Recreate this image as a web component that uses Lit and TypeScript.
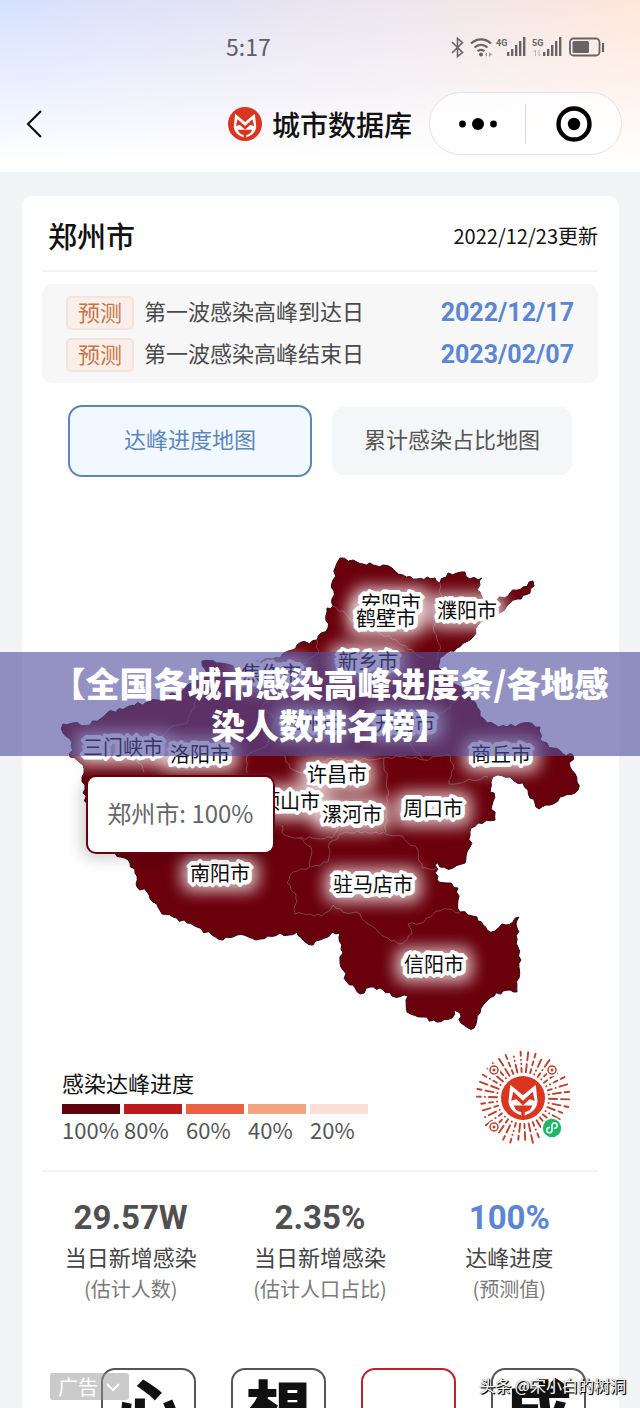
import { LitElement, html, svg, css } from "lit";
import { customElement, property, state } from "lit/decorators.js";
import { classMap } from "lit/directives/class-map.js";

type Pt = [number, number];

/* Outline of Henan province, clockwise from the north-west corner of Anyang. */
const OUTLINE: Pt[] = [
  [340, 558], [353, 560], [363, 564], [373, 565], [383, 565], [392, 568], [403, 575], [417, 579],
  [427, 577], [435, 578], [440, 583], [448, 573], [457, 573], [465, 572], [470, 579], [482, 578],
  [480, 585], [477, 590], [480, 592], [482, 597], [489, 601], [497, 600], [510, 593], [523, 587],
  [533, 581], [534, 586], [530, 593], [517, 599], [507, 606], [500, 613], [490, 618], [478, 625],
  [473, 637], [466, 642], [457, 648], [450, 651], [440, 658], [438, 667], [446, 675], [453, 683],
  [467, 693], [477, 707], [480, 716], [487, 723], [507, 727], [523, 723], [540, 727], [540, 740],
  [553, 748], [563, 754], [573, 755], [570, 767], [577, 782], [578, 790], [560, 797], [550, 805],
  [539, 809], [535, 803], [530, 798], [528, 790], [523, 783], [514, 781], [510, 777], [497, 775],
  [491, 782], [490, 792], [494, 793], [492, 805], [495, 820], [478, 823], [471, 828], [470, 847],
  [466, 856], [465, 863], [453, 868], [440, 867], [437, 862], [437, 880], [447, 883], [458, 888],
  [458, 900], [460, 912], [477, 917], [483, 925], [487, 930], [495, 931], [502, 924], [513, 922],
  [519, 917], [517, 928], [518, 947], [521, 960], [519, 978], [517, 992], [503, 991], [494, 996],
  [484, 1004], [480, 1013], [474, 1028], [468, 1028], [461, 1023], [460, 1013], [454, 1010],
  [452, 1018], [437, 1022], [423, 1017], [407, 1012], [408, 996], [392, 996], [380, 988],
  [370, 987], [360, 994], [353, 985], [347, 982], [343, 970], [340, 962], [343, 953], [340, 933],
  [332, 932], [320, 940], [313, 945], [303, 940], [297, 932], [289, 935], [280, 933], [260, 939],
  [237, 935], [223, 940], [212, 935], [197, 927], [187, 923], [173, 917], [162, 914], [153, 902],
  [147, 892], [137, 887], [135, 873], [130, 863], [115, 853], [100, 830], [90, 812], [83, 793],
  [85, 785], [82, 777], [83, 765], [70, 757], [72, 743], [63, 733], [63, 724], [73, 723],
  [90, 725], [107, 713], [127, 707], [157, 700], [180, 692], [193, 683], [207, 673], [202, 661],
  [220, 663], [240, 670], [253, 663], [280, 658], [292, 650], [297, 645], [317, 640], [328, 628],
  [327, 608], [333, 606], [333, 580], [337, 563],
];

const BORDERS: Pt[][] = [
  [[333, 606], [346, 614], [360, 628], [378, 632], [396, 640], [412, 650], [424, 658]],
  [[440, 583], [441, 600], [437, 616], [434, 632], [440, 645], [437, 660]],
  [[317, 640], [318, 654], [302, 664], [290, 678], [280, 694], [262, 706]],
  [[198, 678], [196, 700], [188, 722], [170, 728], [158, 742], [134, 752], [144, 772]],
  [[262, 706], [276, 720], [268, 744], [247, 756], [247, 773]],
  [[284, 755], [290, 768], [306, 774], [330, 758], [352, 760], [384, 758], [388, 790], [386, 832]],
  [[384, 758], [404, 756], [424, 760], [448, 754], [454, 768], [449, 784], [466, 781], [488, 777]],
  [[424, 760], [400, 734], [420, 718], [444, 712], [460, 696]],
  [[282, 825], [284, 835], [298, 838], [311, 847], [310, 867], [293, 872], [287, 883], [296, 894],
    [295, 914], [310, 914], [322, 916], [333, 905], [343, 912], [356, 912], [372, 926], [388, 938],
    [402, 944], [412, 934], [408, 924], [424, 922], [436, 911], [448, 909], [460, 913]],
  [[311, 867], [328, 862], [330, 842], [346, 832], [376, 832], [402, 836], [418, 850], [422, 868], [437, 868]],
  [[298, 838], [332, 838], [338, 826]],
];

/* Adds small coast-like teeth between the surveyed points. */
function rough(points: Pt[], closed: boolean, amp: number): string {
  const out: string[] = [];
  const n = points.length;
  let k = 0;
  for (let i = 0; i < (closed ? n : n - 1); i++) {
    const [ax, ay] = points[i];
    const [bx, by] = points[(i + 1) % n];
    const len = Math.hypot(bx - ax, by - ay) || 1;
    const steps = Math.max(1, Math.round(len / 4));
    for (let s = 0; s < steps; s++) {
      const t = s / steps;
      k++;
      const d = s === 0 ? 0 : Math.sin(k * 2.4 + Math.sin(k * 5.1) * 2) * amp;
      const x = ax + (bx - ax) * t - ((by - ay) / len) * d;
      const y = ay + (by - ay) * t + ((bx - ax) / len) * d;
      out.push(`${x.toFixed(1)} ${y.toFixed(1)}`);
    }
  }
  if (!closed) out.push(points[n - 1].join(" "));
  return `M${out.join("L")}${closed ? "Z" : ""}`;
}

const CITIES: { name: string; x: number; y: number }[] = [
  { name: "安阳市", x: 391, y: 611 },
  { name: "鹤壁市", x: 386, y: 626 },
  { name: "濮阳市", x: 467, y: 618 },
  { name: "新乡市", x: 368, y: 669 },
  { name: "焦作市", x: 271, y: 681 },
  { name: "郑州市", x: 312, y: 731 },
  { name: "开封市", x: 405, y: 731 },
  { name: "三门峡市", x: 123, y: 755 },
  { name: "洛阳市", x: 200, y: 762 },
  { name: "商丘市", x: 501, y: 762 },
  { name: "许昌市", x: 337, y: 782 },
  { name: "平顶山市", x: 280, y: 809 },
  { name: "漯河市", x: 352, y: 822 },
  { name: "周口市", x: 433, y: 816 },
  { name: "南阳市", x: 220, y: 881 },
  { name: "驻马店市", x: 373, y: 892 },
  { name: "信阳市", x: 434, y: 972 },
];

const fox = svg`
  <circle cx="50" cy="50" r="50" fill="#d9351f"/>
  <path d="M21 20 50 44 79 20 83 58C81 76 69 84 55 89L50 93 45 89C31 84 19 76 17 58Z" fill="#fff"/>
  <path d="M28 36 50 56 72 36 77 56 65 53 50 67 35 53 23 56Z" fill="#d9351f"/>
  <path d="M29 67H71C68 77 61 81 54 82V96H46V82C39 81 32 77 29 67Z" fill="#d9351f"/>
`;

@customElement("city-map")
class CityMap extends LitElement {
  static styles = css`
    :host { display: block; position: relative; }
    .map { display: block; width: 100%; height: auto; }
    .land { fill: #6a000c; stroke: #2e0a10; stroke-width: 1; stroke-linejoin: round; }
    .border { fill: none; stroke: #80404b; stroke-width: 1; }
    .glow { fill: #fff; opacity: 0.75; filter: blur(8px); }
    .label {
      fill: #0a0a0a; stroke: #fff; stroke-width: 9; stroke-linejoin: bevel; paint-order: stroke;
      font-size: 20px; text-anchor: middle;
    }
    .tip {
      position: absolute; left: 7.9%; top: 52.2%; box-sizing: border-box; height: 79px; width: 189px;
      display: grid; place-items: center; padding-bottom: 4px; border: 2px solid #6a000c; border-radius: 10px;
      background: #fff; color: #666; font-size: 24px; white-space: nowrap;
      box-shadow: -4px 4px 16px rgba(0, 0, 0, 0.2);
    }
  `;
  render() {
    return html`
      <svg class="map" viewBox="42 477 556 571" role="img" aria-label="达峰进度地图">
        <path class="land" d=${rough(OUTLINE, true, 1.8)}></path>
        ${BORDERS.map((b) => svg`<path class="border" d=${rough(b, false, 1.4)}></path>`)}
        ${CITIES.map((c) => {
          const w = c.name.length * 20 + 16;
          return svg`<rect class="glow" x=${c.x - w / 2} y=${c.y - 24} width=${w} height="34" rx="8"></rect>`;
        })}
        ${CITIES.map((c) => svg`<text class="label" x=${c.x} y=${c.y}>${c.name}</text>`)}
      </svg>
      <div class="tip" role="tooltip">郑州市: 100%</div>
    `;
  }
}

@customElement("mini-code")
class MiniCode extends LitElement {
  static styles = css`
    :host { display: block; }
    .code { display: block; width: 96px; height: 96px; }
  `;
  private rays() {
    const parts = [];
    const count = 38;
    for (let i = 0; i < count; i++) {
      const a = (i / count) * Math.PI * 2 + 0.03;
      let r = 26;
      let k = i * 7 + 3;
      while (r < 46) {
        k = (k * 37 + 11 + i) % 101;
        const len = k % 3 === 0 ? 8 : k % 3 === 1 ? 0.2 : 4;
        const end = Math.min(r + len, 46.5);
        const p = (q: number) => `${(48 + Math.cos(a) * q).toFixed(1)} ${(48 + Math.sin(a) * q).toFixed(1)}`;
        parts.push(svg`<path d=${`M${p(r)}L${p(end)}`}></path>`);
        r = end + 4;
      }
    }
    return parts;
  }
  render() {
    return html`
      <svg class="code" viewBox="0 0 96 96" role="img" aria-label="小程序码">
        <g stroke="#b8432f" stroke-width="1.9" stroke-linecap="round">${this.rays()}</g>
        ${[[19, 20], [77, 20], [19, 77]].map(
          ([x, y]) => svg`
            <circle cx=${x} cy=${y} r="6.5" fill="#fff"></circle>
            <circle cx=${x} cy=${y} r="4" fill="none" stroke="#b8432f" stroke-width="1.5"></circle>
            <circle cx=${x} cy=${y} r="1.5" fill="#b8432f"></circle>`,
        )}
        <circle cx="48" cy="48" r="24" fill="#fff"></circle>
        <g transform="translate(26 26) scale(.44)">${fox}</g>
        <circle cx="77" cy="78" r="11" fill="#fff"></circle>
        <circle cx="77" cy="78" r="9.2" fill="#1fb868"></circle>
        <path d="M74.4 77.6A2.6 2.6 0 1 0 77 80.4V75.6A2.6 2.6 0 1 1 79.6 78.2" fill="none"
          stroke="#fff" stroke-width="1.5" stroke-linecap="round"></path>
      </svg>
    `;
  }
}

@customElement("stat-cell")
class StatCell extends LitElement {
  @property() value = "";
  @property() label = "";
  @property() note = "";
  @property({ type: Boolean }) accent = false;
  static styles = css`
    :host { display: block; text-align: center; white-space: nowrap; }
    .value { font: 700 33px/40px Roboto, "Noto Sans CJK SC", sans-serif; color: #505052; }
    .accent { color: #5b86d6; }
    .label { font-size: 22px; line-height: 36px; color: #444; }
    .note { font-size: 20px; line-height: 30px; color: #7a7a7a; }
  `;
  render() {
    return html`
      <div class=${classMap({ value: true, accent: this.accent })}>${this.value}</div>
      <div class="label">${this.label}</div>
      <div class="note">${this.note}</div>
    `;
  }
}

@customElement("app-root")
class AppRoot extends LitElement {
  @state() private tab = 0;

  static styles = css`
    :host {
      display: block; position: relative; height: 100vh; overflow: hidden; background: #f2f4f6;
      font-family: "Noto Sans CJK SC", sans-serif; color: #111;
    }
    button { font: inherit; color: inherit; border: 0; background: none; padding: 0; cursor: pointer; }
    .top {
      background:
        linear-gradient(to bottom, rgba(255, 255, 255, 0) 0, rgba(255, 255, 255, 0.5) 50%, #fff 94%),
        linear-gradient(to right, #d5e1ff 0, #e2e2f5 30%, #ede6ee 62%, #ffe6d9 100%);
    }
    .status { display: flex; justify-content: space-between; padding: 34px 34px 30px 226px; }
    .time { font-size: 23px; line-height: 24px; color: #605d64; }
    .signals { display: block; width: 156px; height: 28px; }
    .nav { display: flex; align-items: center; padding: 0 18px 17px 20px; }
    .back { display: grid; place-items: center; width: 28px; height: 40px; }
    .brand { display: flex; align-items: center; gap: 10px; margin-left: auto; margin-right: 17px; }
    .logo { width: 34px; height: 34px; }
    .name { margin: 0; font-size: 28px; line-height: 40px; font-weight: 500; white-space: nowrap; }
    .capsule {
      display: flex; align-items: center; box-sizing: border-box; width: 193px; height: 63px;
      border: 1px solid #e3e2e5; border-radius: 32px; background: rgba(255, 255, 255, 0.8);
    }
    .pill { flex: 1; display: grid; place-items: center; height: 40px; }
    .pill + .pill { border-left: 1px solid #dcdcde; }

    .card { margin: 24px 21px 0 22px; padding: 0 21px 0 20px; background: #fff; border-radius: 10px; }
    .head {
      display: flex; justify-content: space-between; align-items: center; height: 73px;
      border-bottom: 2px solid #f3f3f4; padding-top: 1px;
    }
    .city { margin: 0; padding: 2px 0 0 6px; font-size: 29px; line-height: 40px; font-weight: 500; }
    .date { font-size: 20px; padding-top: 4px; }
    .forecast {
      display: grid; gap: 8px; margin-top: 12px; padding: 12px 24px 11px; background: #f7f7f8; border-radius: 10px;
    }
    .line { display: flex; align-items: center; height: 34px; font-size: 22px; line-height: 30px; color: #4a4a4a; white-space: nowrap; }
    .what { padding-bottom: 6px; }
    .tag {
      box-sizing: border-box; width: 68px; height: 34px; line-height: 26px; margin-right: 10px; text-align: center;
      color: #c57643; background: #f9eee9; border: 2px solid #f4e2dc; border-radius: 5px;
    }
    .day { margin-left: auto; font: 700 25px/34px Roboto, sans-serif; color: #5b86d0; }
    .tabs { display: flex; align-items: center; gap: 20px; height: 72px; margin: 22px 26px 0; }
    .tab {
      flex: 1; height: 68px; padding-bottom: 6px; font-size: 22px; color: #555; background: #f5f6f7;
      border-radius: 12px; white-space: nowrap;
    }
    .tab.on { height: 72px; color: #5b87bd; background: #f2f8ff; border: 2px solid #5b87b8; border-radius: 14px; }
    .legend { display: flex; justify-content: space-between; align-items: flex-start; padding: 2px 27px 24px 20px; }
    .legend-title { padding-top: 17px; font-size: 22px; line-height: 30px; }
    .scale { display: grid; grid-template-columns: repeat(5, 58px); gap: 0 4px; margin: 7px 0 0; padding: 0; list-style: none; }
    .step { font-size: 22px; line-height: 30px; color: #555; white-space: nowrap; }
    .step::before { content: ""; display: block; height: 10px; background: var(--c); }
    .s100 { --c: #5f000c; }
    .s80 { --c: #bd1a20; }
    .s60 { --c: #ec6044; }
    .s40 { --c: #f5a483; }
    .s20 { --c: #fce0d6; }
    .stats {
      display: grid; grid-template-columns: repeat(3, 1fr); padding-top: 26px; margin: 0 -6px;
    }
    .rule { border: 0; border-top: 2px solid #f3f3f4; margin: 0; }
    .ad { position: relative; display: flex; gap: 35px; padding: 64px 12px 20px 59px; }
    .tile {
      box-sizing: border-box; width: 95px; height: 95px; border: 2px solid #555; border-radius: 14px;
      font-size: 66px; line-height: 75px; font-weight: 900; text-align: center;
    }
    .red { border-color: #b8262b; }
    .badge {
      position: absolute; left: 8px; top: 69px; display: flex; align-items: center; gap: 8px; height: 27px;
      padding: 0 9px 0 8px; border-radius: 3px; background: rgba(150, 150, 150, 0.5); color: #fff; font-size: 20px;
      line-height: 24px;
    }
    .banner {
      position: absolute; left: 0; right: 0; top: 652px; box-sizing: border-box; padding: 10px 20px 10px 40px;
      background: rgba(82, 79, 158, 0.62); color: #fff; text-align: center;
      font-size: 34px; line-height: 42px; font-weight: 900;
    }
    .mark {
      position: absolute; right: 14px; bottom: 11px; color: #fff; font-size: 16px; line-height: 24px;
      text-shadow: 1px 1px 1px #000, 1px 1px 0 #333, 0 0 1px #333; white-space: nowrap;
    }
  `;

  private bars(x: number) {
    return [4, 7, 11, 15, 19].map(
      (h, i) => svg`<rect x=${x + i * 4} y=${24 - h} width="2.4" height=${h}></rect>`,
    );
  }

  render() {
    const steps = [100, 80, 60, 40, 20];
    const tabs = ["达峰进度地图", "累计感染占比地图"];
    return html`
      <header class="top">
        <div class="status">
          <span class="time">5:17</span>
          <svg class="signals" viewBox="450 34 156 28" role="img" aria-label="信号与电量">
            <g fill="none" stroke="#6b6265" stroke-width="1.8">
              <path d="M452 42 462.500 52.500 457.500 56.500V38.500L462.500 42.500 452 53" stroke-width="1.6"></path>
              <path d="M471 43.500C477 38 485 38 491 43.500M474.500 47.500C478.500 44 483.500 44 487.500 47.500M477.500 51.200C479.500 49.500 482.500 49.500 484.500 51.200" stroke-width="2.3"></path>
              <rect x="570" y="38.500" width="29.500" height="17" rx="3.500"></rect>
              <path d="M603 43V52" stroke-width="2.2"></path>
            </g>
            <circle cx="481" cy="54.500" r="2" fill="#6b6265"></circle>
            <path d="M489 52 492 54.500 489 57ZM487 52V57L484.800 54.500Z" fill="#a79fa2"></path>
            <rect x="572.500" y="41" width="16.500" height="12" rx="1.500" fill="#6b6265"></rect>
            <g fill="#6b6265" transform="translate(0 32)">${this.bars(507)}${this.bars(543)}</g>
            <g fill="#6b6265" font-family="Roboto, sans-serif" font-size="9" font-weight="700">
              <text x="496" y="46">4G</text>
              <text x="532" y="46">5G</text>
            </g>
            <path d="M535.500 56V50L533.500 52M539 50V56L541 54" fill="none" stroke="#bdb5b8"></path>
          </svg>
        </div>
        <div class="nav">
          <button class="back" aria-label="返回">
            <svg width="18" height="30" viewBox="0 0 18 30" fill="none" stroke="#111" stroke-width="2.200">
              <path d="M16 2 3 15 16 28"></path>
            </svg>
          </button>
          <div class="brand">
            <svg class="logo" viewBox="0 0 100 100" aria-hidden="true">${fox}</svg>
            <h1 class="name">城市数据库</h1>
          </div>
          <div class="capsule">
            <button class="pill" aria-label="更多">
              <svg width="40" height="14" viewBox="0 0 40 14">
                <circle cx="4.500" cy="7" r="3.400"></circle><circle cx="20" cy="7" r="6"></circle>
                <circle cx="35.500" cy="7" r="3.400"></circle>
              </svg>
            </button>
            <button class="pill" aria-label="关闭">
              <svg width="36" height="36" viewBox="0 0 36 36">
                <circle cx="18" cy="18" r="15.500" fill="none" stroke="#000" stroke-width="4.400"></circle>
                <circle cx="18" cy="18" r="6.200"></circle>
              </svg>
            </button>
          </div>
        </div>
      </header>
      <main class="card">
        <div class="head">
          <h2 class="city">郑州市</h2>
          <span class="date">2022/12/23更新</span>
        </div>
        <section class="forecast">
          <div class="line">
            <span class="tag">预测</span><span class="what">第一波感染高峰到达日</span><span class="day">2022/12/17</span>
          </div>
          <div class="line">
            <span class="tag">预测</span><span class="what">第一波感染高峰结束日</span><span class="day">2023/02/07</span>
          </div>
        </section>
        <div class="tabs" role="tablist">
          ${tabs.map(
            (t, i) => html`<button
              role="tab"
              aria-selected=${this.tab === i ? "true" : "false"}
              class=${classMap({ tab: true, on: this.tab === i })}
              @click=${() => (this.tab = i)}
            >${t}</button>`,
          )}
        </div>
        <city-map></city-map>
        <section class="legend">
          <div>
            <div class="legend-title">感染达峰进度</div>
            <ul class="scale">
              ${steps.map((s) => html`<li class="step s${s}">${s}%</li>`)}
            </ul>
          </div>
          <mini-code></mini-code>
        </section>
        <hr class="rule" />
        <section class="stats">
          <stat-cell value="29.57W" label="当日新增感染" note="(估计人数)"></stat-cell>
          <stat-cell value="2.35%" label="当日新增感染" note="(估计人口占比)"></stat-cell>
          <stat-cell value="100%" label="达峰进度" note="(预测值)" accent></stat-cell>
        </section>
        <section class="ad">
          <div class="tile">心</div>
          <div class="tile">想</div>
          <div class="tile red"></div>
          <div class="tile">成</div>
          <div class="badge">
            广告
            <svg width="14" height="10" viewBox="0 0 14 10" fill="none" stroke="#fff" stroke-width="2">
              <path d="M1 2 7 8 13 2"></path>
            </svg>
          </div>
        </section>
      </main>
      <div class="banner">【全国各城市感染高峰进度条/各地感染人数排名榜】</div>
      <div class="mark">头条 @宋小白的树洞</div>
    `;
  }
}
